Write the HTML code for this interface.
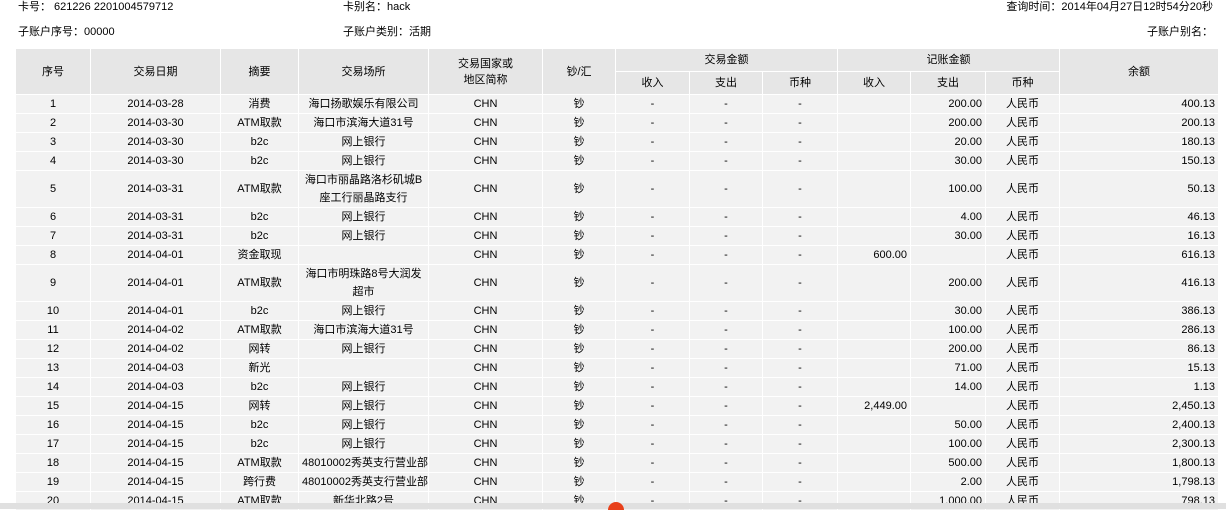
<!DOCTYPE html>
<html><head><meta charset="utf-8"><style>
body{margin:0;width:1226px;height:509px;overflow:hidden;background:#fff;font-family:"Liberation Sans","Noto Sans CJK SC",sans-serif;font-size:11px;color:#000;position:relative}
.t{position:absolute;font-size:11px;white-space:nowrap}
table{position:absolute;left:15px;top:48px;border-collapse:collapse;table-layout:fixed;width:1203px}
td,th{border:1px solid #fff;padding:0 3px;font-weight:normal;text-align:center;line-height:18px;height:18px;overflow:hidden;white-space:nowrap}
th{background:#e6e6e6;height:22px;line-height:16px}
td{background:#f2f2f2}
td.r{text-align:right}
td.w{white-space:normal;line-height:18px}
.bar{position:absolute;left:0;top:503px;width:1226px;height:6px;background:#e0e0e0}
.ic{position:absolute;left:608px;top:502px;width:16px;height:8px;background:#e8401a;border-radius:8px 8px 0 0}
</style></head><body>
<div class="t" style="left:18px;top:-2px">卡号： 621226 2201004579712</div>
<div class="t" style="left:343px;top:-2px">卡别名：hack</div>
<div class="t" style="right:13px;top:-2px">查询时间：2014年04月27日12时54分20秒</div>
<div class="t" style="left:18px;top:23px">子账户序号：00000</div>
<div class="t" style="left:343px;top:23px">子账户类别：活期</div>
<div class="t" style="right:13px;top:23px">子账户别名：</div>
<table>
<colgroup><col style="width:75px"><col style="width:130px"><col style="width:78px"><col style="width:130px"><col style="width:114px"><col style="width:73px"><col style="width:74px"><col style="width:73px"><col style="width:75px"><col style="width:73px"><col style="width:75px"><col style="width:74px"><col style="width:159px"></colgroup>
<tr><th rowspan="2">序号</th><th rowspan="2">交易日期</th><th rowspan="2">摘要</th><th rowspan="2">交易场所</th><th rowspan="2">交易国家或<br>地区简称</th><th rowspan="2">钞/汇</th><th colspan="3">交易金额</th><th colspan="3">记账金额</th><th rowspan="2">余额</th></tr>
<tr><th>收入</th><th>支出</th><th>币种</th><th>收入</th><th>支出</th><th>币种</th></tr>
<tr><td>1</td><td>2014-03-28</td><td>消费</td><td>海口扬歌娱乐有限公司</td><td>CHN</td><td>钞</td><td>-</td><td>-</td><td>-</td><td></td><td class="r">200.00</td><td>人民币</td><td class="r">400.13</td></tr>
<tr><td>2</td><td>2014-03-30</td><td>ATM取款</td><td>海口市滨海大道31号</td><td>CHN</td><td>钞</td><td>-</td><td>-</td><td>-</td><td></td><td class="r">200.00</td><td>人民币</td><td class="r">200.13</td></tr>
<tr><td>3</td><td>2014-03-30</td><td>b2c</td><td>网上银行</td><td>CHN</td><td>钞</td><td>-</td><td>-</td><td>-</td><td></td><td class="r">20.00</td><td>人民币</td><td class="r">180.13</td></tr>
<tr><td>4</td><td>2014-03-30</td><td>b2c</td><td>网上银行</td><td>CHN</td><td>钞</td><td>-</td><td>-</td><td>-</td><td></td><td class="r">30.00</td><td>人民币</td><td class="r">150.13</td></tr>
<tr><td>5</td><td>2014-03-31</td><td>ATM取款</td><td class="w">海口市丽晶路洛杉矶城B<br>座工行丽晶路支行</td><td>CHN</td><td>钞</td><td>-</td><td>-</td><td>-</td><td></td><td class="r">100.00</td><td>人民币</td><td class="r">50.13</td></tr>
<tr><td>6</td><td>2014-03-31</td><td>b2c</td><td>网上银行</td><td>CHN</td><td>钞</td><td>-</td><td>-</td><td>-</td><td></td><td class="r">4.00</td><td>人民币</td><td class="r">46.13</td></tr>
<tr><td>7</td><td>2014-03-31</td><td>b2c</td><td>网上银行</td><td>CHN</td><td>钞</td><td>-</td><td>-</td><td>-</td><td></td><td class="r">30.00</td><td>人民币</td><td class="r">16.13</td></tr>
<tr><td>8</td><td>2014-04-01</td><td>资金取现</td><td></td><td>CHN</td><td>钞</td><td>-</td><td>-</td><td>-</td><td class="r">600.00</td><td></td><td>人民币</td><td class="r">616.13</td></tr>
<tr><td>9</td><td>2014-04-01</td><td>ATM取款</td><td class="w">海口市明珠路8号大润发<br>超市</td><td>CHN</td><td>钞</td><td>-</td><td>-</td><td>-</td><td></td><td class="r">200.00</td><td>人民币</td><td class="r">416.13</td></tr>
<tr><td>10</td><td>2014-04-01</td><td>b2c</td><td>网上银行</td><td>CHN</td><td>钞</td><td>-</td><td>-</td><td>-</td><td></td><td class="r">30.00</td><td>人民币</td><td class="r">386.13</td></tr>
<tr><td>11</td><td>2014-04-02</td><td>ATM取款</td><td>海口市滨海大道31号</td><td>CHN</td><td>钞</td><td>-</td><td>-</td><td>-</td><td></td><td class="r">100.00</td><td>人民币</td><td class="r">286.13</td></tr>
<tr><td>12</td><td>2014-04-02</td><td>网转</td><td>网上银行</td><td>CHN</td><td>钞</td><td>-</td><td>-</td><td>-</td><td></td><td class="r">200.00</td><td>人民币</td><td class="r">86.13</td></tr>
<tr><td>13</td><td>2014-04-03</td><td>新光</td><td></td><td>CHN</td><td>钞</td><td>-</td><td>-</td><td>-</td><td></td><td class="r">71.00</td><td>人民币</td><td class="r">15.13</td></tr>
<tr><td>14</td><td>2014-04-03</td><td>b2c</td><td>网上银行</td><td>CHN</td><td>钞</td><td>-</td><td>-</td><td>-</td><td></td><td class="r">14.00</td><td>人民币</td><td class="r">1.13</td></tr>
<tr><td>15</td><td>2014-04-15</td><td>网转</td><td>网上银行</td><td>CHN</td><td>钞</td><td>-</td><td>-</td><td>-</td><td class="r">2,449.00</td><td></td><td>人民币</td><td class="r">2,450.13</td></tr>
<tr><td>16</td><td>2014-04-15</td><td>b2c</td><td>网上银行</td><td>CHN</td><td>钞</td><td>-</td><td>-</td><td>-</td><td></td><td class="r">50.00</td><td>人民币</td><td class="r">2,400.13</td></tr>
<tr><td>17</td><td>2014-04-15</td><td>b2c</td><td>网上银行</td><td>CHN</td><td>钞</td><td>-</td><td>-</td><td>-</td><td></td><td class="r">100.00</td><td>人民币</td><td class="r">2,300.13</td></tr>
<tr><td>18</td><td>2014-04-15</td><td>ATM取款</td><td>48010002秀英支行营业部</td><td>CHN</td><td>钞</td><td>-</td><td>-</td><td>-</td><td></td><td class="r">500.00</td><td>人民币</td><td class="r">1,800.13</td></tr>
<tr><td>19</td><td>2014-04-15</td><td>跨行费</td><td>48010002秀英支行营业部</td><td>CHN</td><td>钞</td><td>-</td><td>-</td><td>-</td><td></td><td class="r">2.00</td><td>人民币</td><td class="r">1,798.13</td></tr>
<tr><td>20</td><td>2014-04-15</td><td>ATM取款</td><td>新华北路2号</td><td>CHN</td><td>钞</td><td>-</td><td>-</td><td>-</td><td></td><td class="r">1,000.00</td><td>人民币</td><td class="r">798.13</td></tr>
</table>
<div class="bar"></div><div class="ic"></div>
</body></html>
